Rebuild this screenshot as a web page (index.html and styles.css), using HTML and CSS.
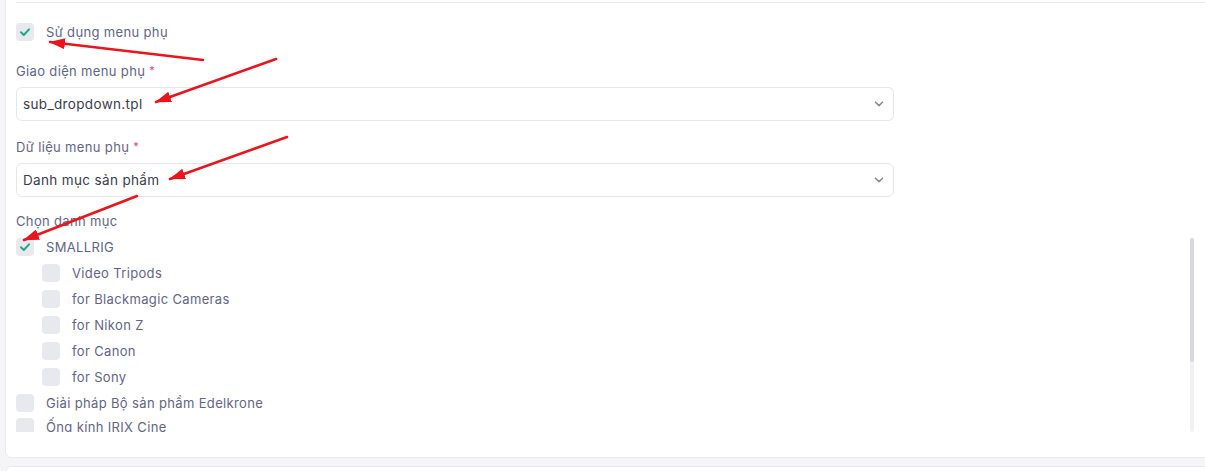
FILE: index.html
```html
<!DOCTYPE html>
<html lang="vi">
<head>
<meta charset="utf-8">
<title>Menu phụ</title>
<link rel="stylesheet" href="styles.css">
</head>
<body>
<div class="page">
  <div class="card">
    <div class="sep"></div>
    <div class="card-body">
      <label class="check">
        <span class="box"><svg viewBox="0 0 18 18" width="18" height="18"><path d="M5 9.3 L7.8 12 L13 6.3" fill="none" stroke="#1fa97f" stroke-width="2" stroke-linecap="round" stroke-linejoin="round"/></svg></span>
        <span class="check-text">Sử dụng menu phụ</span>
      </label>

      <div class="field f1">
        <div class="label">Giao diện menu phụ <span class="req">*</span></div>
        <div class="select">
          <span class="select-text">sub_dropdown.tpl</span>
          <svg class="chev" viewBox="0 0 10 6" width="10" height="6"><path d="M1.5 1.2 L5 4.6 L8.5 1.2" fill="none" stroke="#8a8d9c" stroke-width="1.6" stroke-linecap="round" stroke-linejoin="round"/></svg>
        </div>
      </div>

      <div class="field f2">
        <div class="label">Dữ liệu menu phụ <span class="req">*</span></div>
        <div class="select">
          <span class="select-text">Danh mục sản phẩm</span>
          <svg class="chev" viewBox="0 0 10 6" width="10" height="6"><path d="M1.5 1.2 L5 4.6 L8.5 1.2" fill="none" stroke="#8a8d9c" stroke-width="1.6" stroke-linecap="round" stroke-linejoin="round"/></svg>
        </div>
      </div>

      <div class="field f3">
        <div class="label">Chọn danh mục</div>
        <div class="tree-wrap">
          <div class="tree">
            <label class="check">
              <span class="box"><svg viewBox="0 0 18 18" width="18" height="18"><path d="M5 9.3 L7.8 12 L13 6.3" fill="none" stroke="#1fa97f" stroke-width="2" stroke-linecap="round" stroke-linejoin="round"/></svg></span>
              <span class="check-text">SMALLRIG</span>
            </label>
            <div class="children">
              <label class="check"><span class="box"></span><span class="check-text">Video Tripods</span></label>
              <label class="check"><span class="box"></span><span class="check-text">for Blackmagic Cameras</span></label>
              <label class="check"><span class="box"></span><span class="check-text">for Nikon Z</span></label>
              <label class="check"><span class="box"></span><span class="check-text">for Canon</span></label>
              <label class="check"><span class="box"></span><span class="check-text">for Sony</span></label>
            </div>
            <label class="check"><span class="box"></span><span class="check-text">Giải pháp Bộ sản phẩm Edelkrone</span></label>
            <label class="check"><span class="box"></span><span class="check-text">Ống kính IRIX Cine</span></label>
          </div>
          <div class="track"><div class="thumb"></div></div>
        </div>
      </div>
    </div>
  </div>
  <div class="card next"></div>

  <svg class="arrows" width="1205" height="471" viewBox="0 0 1205 471">
    <defs>
      <marker id="head" markerUnits="userSpaceOnUse" viewBox="0 0 16 11" markerWidth="16" markerHeight="11" refX="15" refY="5.5" orient="auto">
        <path d="M0 0 L16 5.5 L0 11 Z" fill="#e8161c"/>
      </marker>
    </defs>
    <g stroke="#e8161c" stroke-width="2.6" stroke-linecap="round" fill="none">
      <line x1="203" y1="60" x2="50" y2="42" marker-end="url(#head)"/>
      <line x1="276" y1="59" x2="156" y2="102" marker-end="url(#head)"/>
      <line x1="287" y1="137" x2="170" y2="179" marker-end="url(#head)"/>
      <line x1="137" y1="196" x2="24" y2="240" marker-end="url(#head)"/>
    </g>
  </svg>
</div>
</body>
</html>
```

FILE: styles.css
```css
* { box-sizing: border-box; }

html, body {
  margin: 0;
  padding: 0;
}

body {
  background: #f5f5f8;
  font-family: Inter, "Noto Sans", "Liberation Sans", sans-serif;
  font-size: 13px;
  letter-spacing: 0.35px;
  color: #626585;
  overflow: hidden;
}

.page {
  position: relative;
  width: 1205px;
  height: 471px;
  overflow: hidden;
}

.card {
  margin: -10px -30px 0 5px;
  background: #fff;
  border: 1px solid #e9e9ee;
  border-radius: 6px;
}

.card.next {
  margin-top: 8px;
  height: 60px;
}

.sep {
  margin: 11px 0 0 10px;
  border-top: 1px solid #ebebef;
}

.card-body {
  padding: 20px 0 25px 10px;
}

.check {
  display: flex;
  align-items: center;
  gap: 12px;
  height: 18px;
  line-height: 20px;
  color: #626585;
}

.box {
  width: 18px;
  height: 18px;
  flex: none;
  border-radius: 4px;
  background: #e7e9ef;
  display: block;
}

.box svg { display: block; }

.field .label {
  line-height: 20px;
  height: 20px;
  margin-bottom: 6px;
  color: #626585;
}

.req {
  color: #f1416c;
  font-size: 11px;
  position: relative;
  top: -2px;
}

.f1 { margin-top: 20px; }
.f2 { margin-top: 16px; }
.f3 { margin-top: 14px; }
.f3 .label { margin-bottom: 7px; }

.select {
  width: 878px;
  height: 34px;
  border: 1px solid #e4e6ec;
  border-radius: 6px;
  display: flex;
  align-items: center;
  justify-content: space-between;
  padding: 0 9px 0 6px;
  color: #3a3d4e;
  font-size: 13.5px;
}

.chev { display: block; }

.tree-wrap {
  display: flex;
  width: 1178px;
  height: 194px;
}

.tree {
  flex: 1;
  overflow: hidden;
  display: flex;
  flex-direction: column;
  gap: 6px;
}

.tree .check { flex: none; }

.children {
  display: flex;
  flex-direction: column;
  gap: 8px;
  margin: 2px 0 2px 26px;
}

.track {
  width: 4px;
  flex: none;
  background: #f1f1f4;
  border-radius: 2px;
}

.thumb {
  height: 124px;
  background: #d8d8de;
  border-radius: 2px;
}

.arrows {
  position: absolute;
  left: 0;
  top: 0;
  pointer-events: none;
}
```
